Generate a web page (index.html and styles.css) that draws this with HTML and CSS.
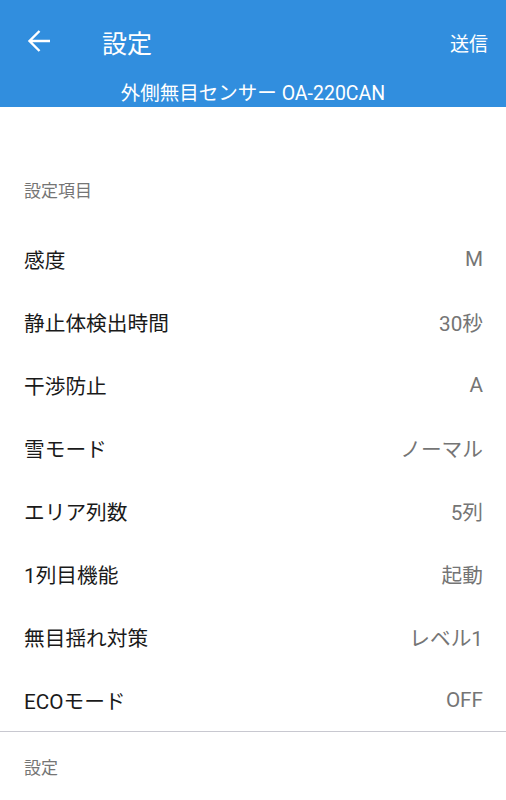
FILE: index.html
```html
<!DOCTYPE html>
<html lang="ja">
  <head>
    <meta charset="utf-8" />
    <meta name="viewport" content="width=device-width, initial-scale=1" />
    <title>設定</title>
    <link rel="stylesheet" href="styles.css">
  </head>
  <body>
    <!-- top app bar -->
    <header class="appbar">
      <div class="appbar-row">
        <span class="back">
          <svg width="24" height="24" viewBox="0 0 24 24">
            <path d="M23 12H2.5M12.5 2L2.5 12l10 10" fill="none" stroke="#fff" stroke-width="2.4" />
          </svg>
        </span>
        <h1 class="title">設定</h1>
        <span class="send">送信</span>
      </div>
      <div class="subtitle">外側無目センサー OA-220CAN</div>
    </header>

    <main class="settings">
      <div class="section-label first">設定項目</div>
      <ul class="list">
        <li class="item"><span>感度</span><span class="value">M</span></li>
        <li class="item"><span>静止体検出時間</span><span class="value">30秒</span></li>
        <li class="item"><span>干渉防止</span><span class="value">A</span></li>
        <li class="item"><span>雪モード</span><span class="value">ノーマル</span></li>
        <li class="item"><span>エリア列数</span><span class="value">5列</span></li>
        <li class="item"><span>1列目機能</span><span class="value">起動</span></li>
        <li class="item"><span>無目揺れ対策</span><span class="value">レベル1</span></li>
        <li class="item"><span>ECOモード</span><span class="value">OFF</span></li>
      </ul>
      <div class="section-label">設定</div>
    </main>
  </body>
</html>
```

FILE: styles.css
```css
body {
  margin: 0;
  font-family: Roboto, "Noto Sans CJK JP", sans-serif;
  background-color: #fff;
  color: #1a1a1a;
}

.appbar {
  height: 107px;
  background-color: #318ede;
  color: #fff;
}

.appbar-row {
  display: flex;
  align-items: center;
  height: 84px;
  padding: 0 18px 0 27px;
}

.back {
  display: flex;
  width: 24px;
  height: 24px;
  margin-top: -2px;
}

.title {
  margin: 0 0 0 51px;
  font-size: 25px;
  font-weight: 400;
  flex: 1;
}

.send {
  font-size: 19px;
}

.subtitle {
  text-align: center;
  font-size: 19.5px;
  line-height: 22px;
  margin-top: -1px;
}

.section-label {
  padding: 24px 24px 0;
  font-size: 17px;
  line-height: 24px;
  color: #757575;
}

/* first header sits lower, under an empty gap */
.section-label.first {
  padding-top: 72px;
  padding-bottom: 24px;
}

.list {
  list-style: none;
  margin: 0;
  padding: 0;
  border-bottom: 1px solid #c8c8d0;
}

.item {
  display: flex;
  justify-content: space-between;
  align-items: center;
  height: 63px;
  padding: 0 23px 0 24px;
  font-size: 20.7px;
}

.value {
  color: #757575;
}
```
